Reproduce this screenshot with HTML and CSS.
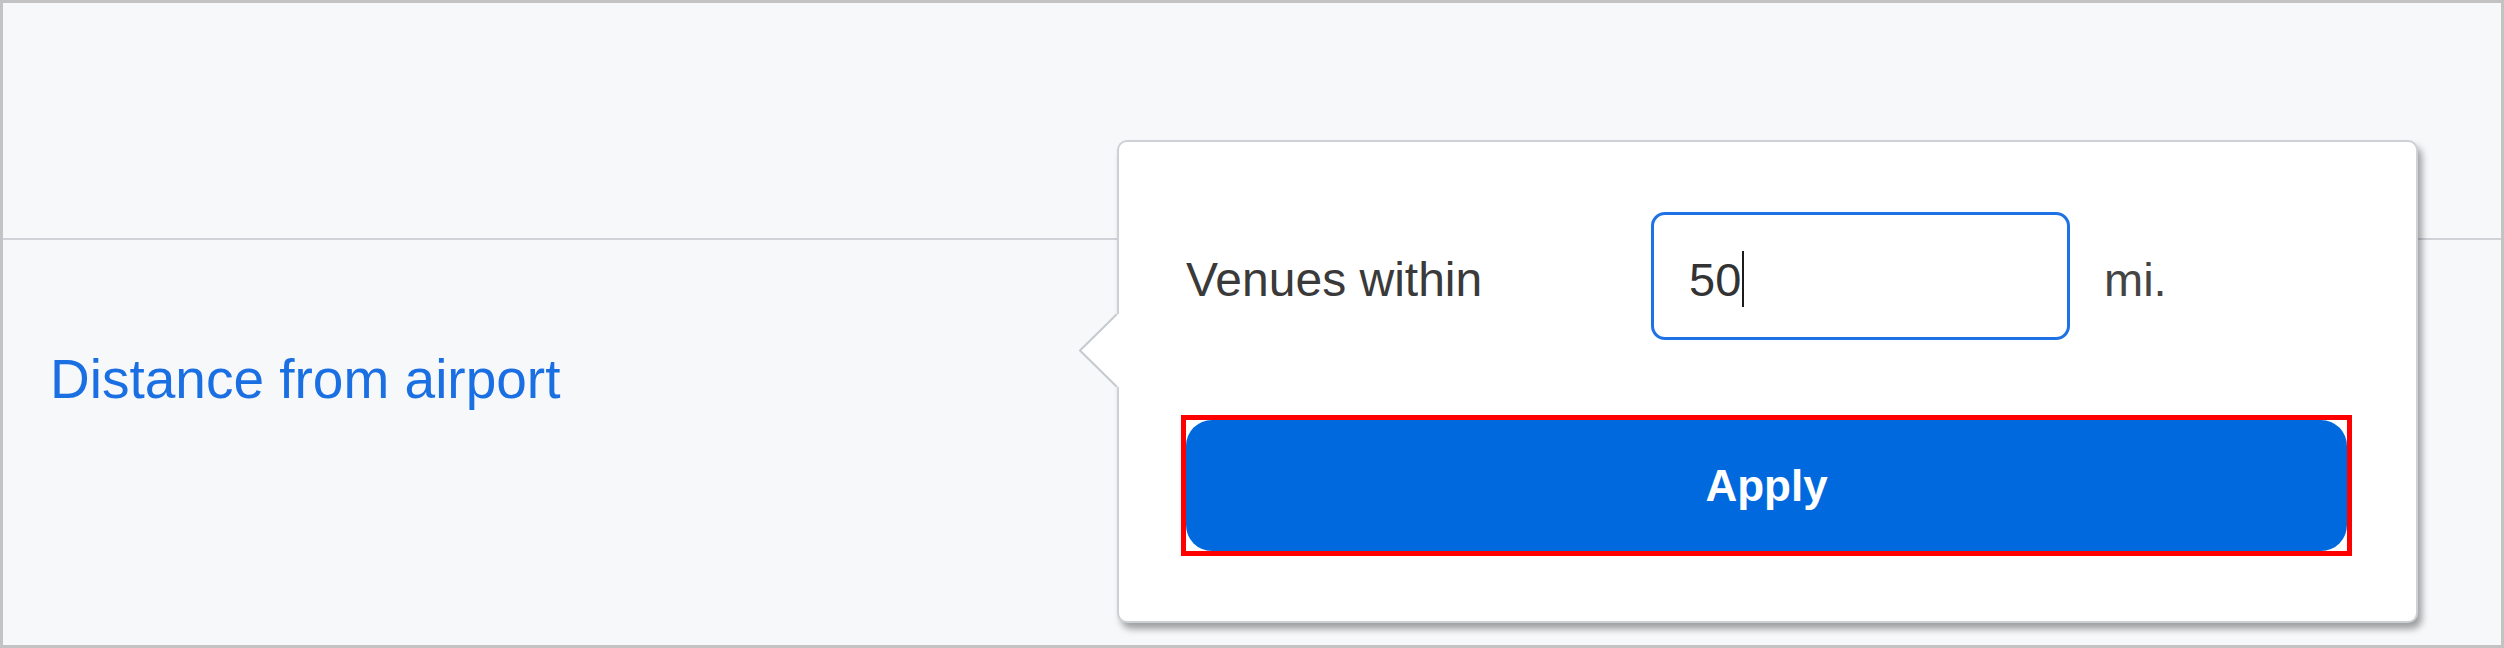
FILE: index.html
```html
<!DOCTYPE html>
<html lang="en">
<head>
<meta charset="utf-8">
<title>Distance filter</title>
<link rel="stylesheet" href="styles.css">
</head>
<body>
<div class="frame">
  <div class="header"></div>
  <div class="row">
    <a class="filter-link" href="#">Distance from airport</a>
  </div>

  <div class="popover">
    <svg class="arrow" width="40" height="73" viewBox="0 0 40 73" aria-hidden="true">
      <polygon points="40,0 38,0 1,36.5 38,73 40,73" fill="#ffffff"/>
      <polyline points="38,0 1,36.5 38,73" fill="none" stroke="#c6cace" stroke-width="2"/>
    </svg>
    <div class="field-row">
      <span class="label">Venues within</span>
      <div class="field"><span class="value">50</span><span class="caret"></span></div>
      <span class="unit">mi.</span>
    </div>
    <div class="highlight">
      <button class="apply" type="button">Apply</button>
    </div>
  </div>
</div>
</body>
</html>
```

FILE: styles.css
```css
html, body {
  margin: 0;
  padding: 0;
}

body {
  font-family: "Liberation Sans", Arial, sans-serif;
}

.frame {
  position: relative;
  width: 2504px;
  height: 648px;
  box-sizing: border-box;
  border: 3px solid #c3c3c3;
  background: #f7f8fa;
  display: flex;
  flex-direction: column;
}

.header {
  height: 235px;
  border-bottom: 2px solid #cfd3d7;
  flex: none;
}

.row {
  padding: 109px 0 0 47px;
}

.filter-link {
  font-size: 55px;
  line-height: 61px;
  color: #1a6fe3;
  text-decoration: none;
}

.popover {
  position: absolute;
  left: 1114px;
  top: 137px;
  width: 1301px;
  box-sizing: border-box;
  background: #ffffff;
  border: 2px solid #cdd0d4;
  border-radius: 10px;
  box-shadow: 4px 6px 7px rgba(0, 0, 0, 0.36);
  padding: 70px 64px 65px 62px;
}

.arrow {
  position: absolute;
  left: -40px;
  top: 172px;
  display: block;
}

.field-row {
  display: flex;
  align-items: center;
  height: 128px;
  padding-left: 5px;
}

.label {
  width: 465px;
  font-size: 48px;
  color: #3a3a3a;
  padding-top: 7px;
}

.field {
  width: 419px;
  height: 128px;
  box-sizing: border-box;
  border: 3px solid #1f72e4;
  border-radius: 14px;
  display: flex;
  align-items: center;
  padding: 7px 0 0 35px;
  font-size: 47px;
  color: #333333;
}

.caret {
  display: inline-block;
  width: 2px;
  height: 56px;
  background: #1b1b1b;
  margin-left: 1px;
  margin-top: -2px;
}

.unit {
  margin-left: 34px;
  font-size: 47px;
  color: #444444;
  padding-top: 7px;
}

.highlight {
  margin-top: 75px;
  border: 5px solid #ff0000;
}

.apply {
  display: block;
  width: 100%;
  height: 131px;
  border: none;
  border-radius: 26px;
  background: #0069de;
  color: #ffffff;
  font-family: "Liberation Sans", Arial, sans-serif;
  font-weight: bold;
  font-size: 44px;
  padding: 0;
  cursor: pointer;
}
```
